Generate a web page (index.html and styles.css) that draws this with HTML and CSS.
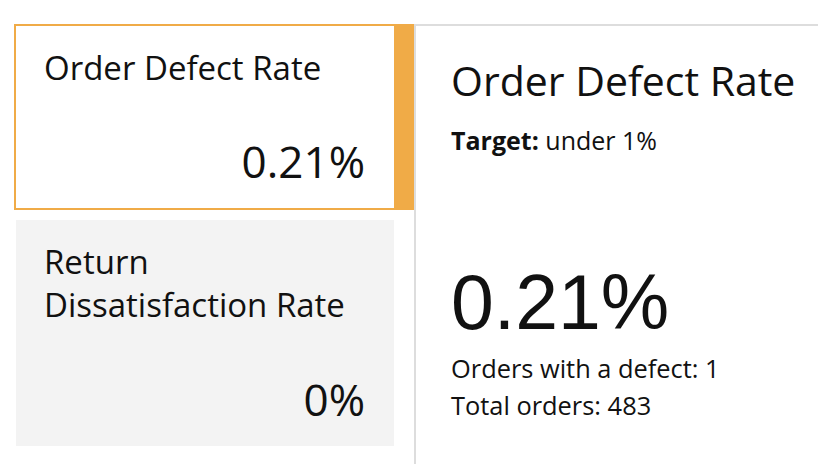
FILE: index.html
```html
<!DOCTYPE html>
<html>
<head>
<meta charset="utf-8">
<link rel="stylesheet" href="styles.css">
</head>
<body>
<div class="layout">
  <div class="sidebar">
    <div class="metric metric-active">
      <div class="metric-title">Order Defect Rate</div>
      <div class="metric-value">0.21%</div>
    </div>
    <div class="metric metric-idle">
      <div class="metric-title">Return<br>Dissatisfaction Rate</div>
      <div class="metric-value">0%</div>
    </div>
  </div>
  <div class="detail">
    <h1 class="detail-title">Order Defect Rate</h1>
    <p class="detail-target"><b>Target:</b> under 1%</p>
    <div class="detail-value">0.21%</div>
    <p class="detail-line detail-line-first">Orders with a defect: 1</p>
    <p class="detail-line">Total orders: 483</p>
  </div>
</div>
</body>
</html>
```

FILE: styles.css
```css
html, body {
  margin: 0;
  padding: 0;
  background: #ffffff;
}
body {
  font-family: "Open Sans", "Noto Sans", sans-serif;
  color: #111111;
  width: 818px;
  height: 464px;
  overflow: hidden;
}
.layout {
  display: flex;
  padding: 24px 0 0 14px;
  height: 440px;
}
.sidebar {
  width: 400px;
  display: flex;
  flex-direction: column;
  gap: 10px;
}
.metric {
  display: flex;
  flex-direction: column;
  justify-content: space-between;
  box-sizing: border-box;
  padding: 20px 29px 23px 28px;
}
.metric-active {
  height: 186px;
  border: 2px solid #f0ab47;
  border-right-width: 20px;
  background: #ffffff;
}
.metric-idle {
  height: 226px;
  margin: 0 20px 0 2px;
  background: #f3f3f3;
}
.metric-title {
  font-size: 33px;
  line-height: 43px;
}
.metric-value {
  font-size: 44px;
  line-height: 48px;
  text-align: right;
}
.detail {
  flex: 1;
  border-top: 2px solid #dddddd;
  border-left: 2px solid #dddddd;
  padding: 28px 0 0 35px;
}
.detail-title {
  margin: 0;
  font-size: 41px;
  font-weight: normal;
  line-height: 52px;
}
.detail-target {
  margin: 18px 0 0;
  font-size: 25px;
  line-height: 32px;
}
.detail-target b {
  font-weight: bold;
}
.detail-value {
  margin-top: 101px;
  font-family: "Liberation Sans", Arial, sans-serif;
  font-size: 77px;
  line-height: 90px;
}
.detail-line {
  margin: 0;
  font-size: 25.4px;
  line-height: 37px;
}
.detail-line-first {
  margin-top: 3px;
}
```
